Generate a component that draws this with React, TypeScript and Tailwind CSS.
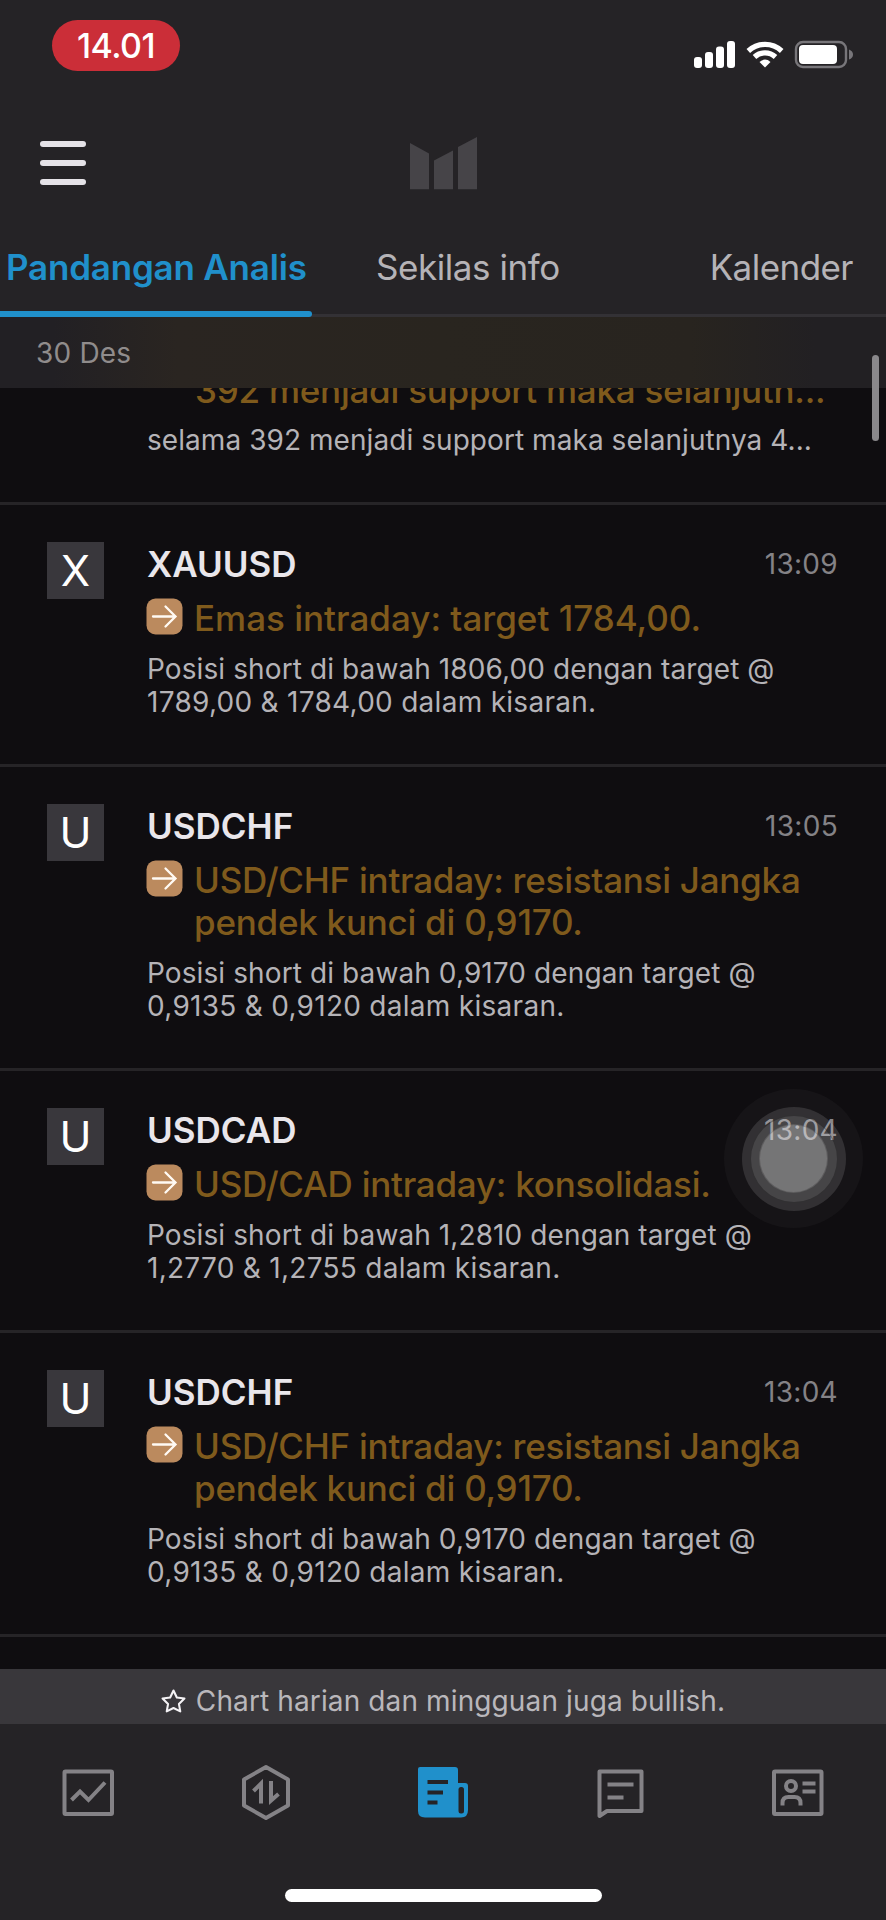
import React from 'react';

interface NewsItem {
  symbol: string;
  time: string;
  title: string[];
  titleClass: string;
  body: string[];
}

const items: NewsItem[] = [
  {
    symbol: 'XAUUSD',
    time: '13:09',
    title: ['Emas intraday: target 1784,00.'],
    titleClass: 'tracking-normal',
    body: ['Posisi short di bawah 1806,00 dengan target @', '1789,00 & 1784,00 dalam kisaran.'],
  },
  {
    symbol: 'USDCHF',
    time: '13:05',
    title: ['USD/CHF intraday: resistansi Jangka', 'pendek kunci di 0,9170.'],
    titleClass: 'tracking-[-0.25px]',
    body: ['Posisi short di bawah 0,9170 dengan target @', '0,9135 & 0,9120 dalam kisaran.'],
  },
  {
    symbol: 'USDCAD',
    time: '13:04',
    title: ['USD/CAD intraday: konsolidasi.'],
    titleClass: 'tracking-[-0.25px]',
    body: ['Posisi short di bawah 1,2810 dengan target @', '1,2770 & 1,2755 dalam kisaran.'],
  },
  {
    symbol: 'USDCHF',
    time: '13:04',
    title: ['USD/CHF intraday: resistansi Jangka', 'pendek kunci di 0,9170.'],
    titleClass: 'tracking-[-0.25px]',
    body: ['Posisi short di bawah 0,9170 dengan target @', '0,9135 & 0,9120 dalam kisaran.'],
  },
];

function StatusBar() {
  return (
    <div className="flex h-[100px] items-start justify-between pl-[52px] pr-[33px] pt-5">
      <div className="flex h-[51px] w-32 items-center justify-center rounded-[26px] bg-[#cb2e38] text-[34px] font-medium tracking-[-0.5px] text-white">
        14.01
      </div>
      <svg className="mt-[19px]" width="160" height="32" viewBox="693 39 160 32" fill="#fff">
        <rect x="694" y="57" width="8" height="11" rx="3" />
        <rect x="705" y="52" width="8" height="16" rx="3" />
        <rect x="716" y="46.500" width="8" height="21.500" rx="3" />
        <rect x="727" y="41" width="8" height="27" rx="3" />
        <g fill="none" stroke="#fff" strokeWidth="5.200">
          <path d="M748.300 51 A24.500 24.500 0 0 1 781.700 51" />
          <path d="M754.500 57 A15.500 15.500 0 0 1 775.500 57" />
        </g>
        <path d="M759.500 62 Q765 57.200 770.500 62 L765 67.500 Z" />
        <rect x="796" y="42" width="50" height="25" rx="7" fill="none" stroke="#78767a" strokeWidth="2.400" />
        <rect x="799" y="45" width="38" height="19" rx="4" />
        <path d="M849 49.500 Q853 51 853 54.500 Q853 58 849 59.500 Z" fill="#78767a" />
      </svg>
    </div>
  );
}

function TopBar() {
  return (
    <div className="flex h-[130px] items-start justify-between px-10 pt-[37px]">
      <button className="mt-1 flex w-[46px] flex-col gap-[13px]">
        <span className="h-1.5 rounded-full bg-[#e5e2e7]"></span>
        <span className="h-1.5 rounded-full bg-[#e5e2e7]"></span>
        <span className="h-1.5 rounded-full bg-[#e5e2e7]"></span>
      </button>
      <svg width="67" height="53" viewBox="0 0 67 53" fill="#464448">
        <path d="M0 6 L19 16.500 V52.300 H0 Z" />
        <path d="M24 23.500 L43 13.500 V52.300 H24 Z" />
        <path d="M48 10 L67 0 V52.300 H48 Z" />
      </svg>
      <div className="w-[46px]"></div>
    </div>
  );
}

function Tabs() {
  return (
    <div className="flex h-[87px] items-stretch border-b-[3px] border-[#333135] text-[35px] leading-[50px] tracking-[-0.45px] text-[#b5b3b7]">
      <div className="relative w-[312px] whitespace-nowrap pl-1.5 pt-3 font-semibold tracking-[-0.2px] text-[#2090cb]">
        Pandangan Analis
        <span className="absolute -bottom-[3px] left-0 h-1.5 w-full rounded-r-full bg-[#2090cb]"></span>
      </div>
      <div className="ml-16 pt-3">Sekilas info</div>
      <div className="ml-auto pr-[33px] pt-3 tracking-[-0.55px]">Kalender</div>
    </div>
  );
}

function ArrowEmoji() {
  return (
    <svg width="37" height="37" viewBox="0 0 37 37" className="-mt-px shrink-0">
      <rect x="0.500" y="0.500" width="36" height="36" rx="9" fill="#bb8a5e" />
      <path d="M7 18.500 H29 M19.500 8.500 L29.500 18.500 L19.500 28.500" fill="none" stroke="#fffaf4" strokeWidth="2.300" strokeLinecap="round" />
    </svg>
  );
}

function NewsRow({ item }: { item: NewsItem }) {
  return (
    <div className="flex border-b-[3px] border-[#262427] pb-[45px] pl-[47px] pr-12 pt-[37px]">
      <div className="flex h-[57px] w-[57px] shrink-0 items-center justify-center bg-[#39373c] text-[43px] leading-none text-white">
        {item.symbol[0]}
      </div>
      <div className="ml-[43px] grow">
        <div className="flex h-[57px] justify-between">
          <span className="text-[35px] font-semibold leading-[44px] text-[#e9e6eb]">{item.symbol}</span>
          <span className="text-[28px] leading-[44px] tracking-[0.3px] text-[#848286]">{item.time}</span>
        </div>
        <div className="-ml-px flex gap-[11px]">
          <ArrowEmoji />
          <div className={`-mt-0.5 whitespace-nowrap text-[35px] font-medium leading-[42px] text-[#7f5a1c] ${item.titleClass}`}>
            {item.title.map((line) => (
              <div key={line}>{line}</div>
            ))}
          </div>
        </div>
        <div className="mt-3.5 whitespace-nowrap text-[28px] leading-[33px] text-[#b5b3b7]">
          {item.body.map((line, i) => (
            <div key={line} className={i === 0 ? 'tracking-[0.1px]' : 'tracking-[0.28px]'}>{line}</div>
          ))}
        </div>
      </div>
    </div>
  );
}

function BottomNav() {
  return (
    <div className="flex h-[196px] shrink-0 flex-col items-center justify-between bg-[#252326] pb-[18px] pt-10">
      <div className="flex w-full justify-between px-[61px]">
        <svg width="54" height="56" viewBox="61 1764 54 56" fill="none" stroke="#848286" strokeWidth="4">
          <rect x="64.500" y="1771.500" width="47.500" height="42.500" rx="1" />
          <path d="M71.500 1800 L80 1791.500 L88.500 1800 L105 1782.500" />
        </svg>
        <svg width="54" height="56" viewBox="238.500 1764 54 56" fill="none" stroke="#848286" strokeWidth="4">
          <path d="M265.500 1767 L287.500 1779.500 V1805.500 L265.500 1818 L243.500 1805.500 V1779.500 Z" strokeLinejoin="round" />
          <path d="M253 1791 L260.500 1783.500 V1803.500 M270.500 1781 V1800.500 L278 1794" />
        </svg>
        <svg width="54" height="56" viewBox="416 1764 54 56">
          <path d="M420 1767 H455 Q458 1767 458 1770 V1783 H465 Q468 1783 468 1786 V1810 Q468 1817.500 461 1817.500 H425 Q418 1817.500 418 1811 V1769 Q418 1767 420 1767 Z" fill="#2090cb" />
          <rect x="458.500" y="1787" width="5.500" height="26.500" rx="2.500" fill="#252326" />
          <path d="M427.500 1782 H448 M427.500 1792.500 H443 M427.500 1802.500 H437.500" stroke="#252326" strokeWidth="4" />
        </svg>
        <svg width="54" height="56" viewBox="593.500 1764 54 56" fill="none" stroke="#848286" strokeWidth="4" strokeLinejoin="round">
          <path d="M599 1771.500 H641 V1811 H606.500 L599 1816 Z" />
          <path d="M607 1784.500 H633 M607 1797.500 H623" />
        </svg>
        <svg width="54" height="56" viewBox="770.500 1764 54 56" fill="none" stroke="#848286" strokeWidth="4">
          <rect x="773.500" y="1771.500" width="47.500" height="42.500" rx="1" />
          <circle cx="790.500" cy="1786" r="5" />
          <path d="M782 1805.500 V1803 Q782 1797 788 1797 H794 Q800 1797 800 1803 V1805.500 M802 1783.500 H815 M802 1791.500 H815" />
        </svg>
      </div>
      <div className="h-[13px] w-[317px] rounded-full bg-white"></div>
    </div>
  );
}

export default function App() {
  return (
    <div className="relative flex h-[1920px] w-[886px] flex-col overflow-hidden bg-[#0f0d10] font-['Inter',sans-serif]">
      <header className="shrink-0 bg-[#252326]">
        <StatusBar />
        <TopBar />
        <Tabs />
      </header>

      <div className="h-[71px] shrink-0 bg-[linear-gradient(to_right,#222024_6%,#2a2521_20%,#29251f_50%,#28241f_78%,#222023_92%)] pl-9 pt-4 text-[28px] leading-[40px] tracking-[0.2px] text-[#908c8c]">
        30 Des
      </div>

      <main className="min-h-0 grow overflow-hidden">
        <div className="h-[117px] overflow-hidden whitespace-nowrap border-b-[3px] border-[#262427]">
          <div className="-mt-[19px] pl-[195px] text-[35px] font-medium leading-[42px] tracking-[-0.24px] text-[#7f5a1c]">392 menjadi support maka selanjutn...</div>
          <div className="mt-[13px] pl-[147px] text-[28px] leading-[33px] tracking-[0.06px] text-[#b5b3b7]">selama 392 menjadi support maka selanjutnya 4...</div>
        </div>
        {items.map((item, i) => (
          <NewsRow key={i} item={item} />
        ))}
      </main>

      <div className="flex h-[55px] shrink-0 items-center justify-center gap-[10px] bg-[#39373b] pt-[9px] text-[28px] tracking-[0.12px] text-[#b9b7bb]">
        <svg width="25" height="25" viewBox="0 0 24 24" fill="none" stroke="#f4f2f5" strokeWidth="2" strokeLinejoin="round">
          <path d="M12 1.500 L15.200 8.200 L22.500 9.200 L17.200 14.300 L18.500 21.500 L12 18.200 L5.500 21.500 L6.800 14.300 L1.500 9.200 L8.800 8.200 Z" />
        </svg>
        <span>Chart harian dan mingguan juga bullish.</span>
      </div>
      <BottomNav />

      {/* scroll indicator */}
      <div className="absolute left-[872px] top-[355px] h-[86px] w-[7px] rounded-full bg-[#8a888b]"></div>

      {/* assistive touch */}
      <div className="absolute left-[724px] top-[1089px] flex h-[139px] w-[139px] items-center justify-center rounded-full bg-white/3">
        <div className="flex h-[104px] w-[104px] items-center justify-center rounded-full bg-white/12">
          <div className="flex h-[88px] w-[88px] items-center justify-center rounded-full border border-black/30 bg-white/10">
            <div className="h-[69px] w-[69px] rounded-full border border-black/20 bg-white/26"></div>
          </div>
        </div>
      </div>
    </div>
  );
}
